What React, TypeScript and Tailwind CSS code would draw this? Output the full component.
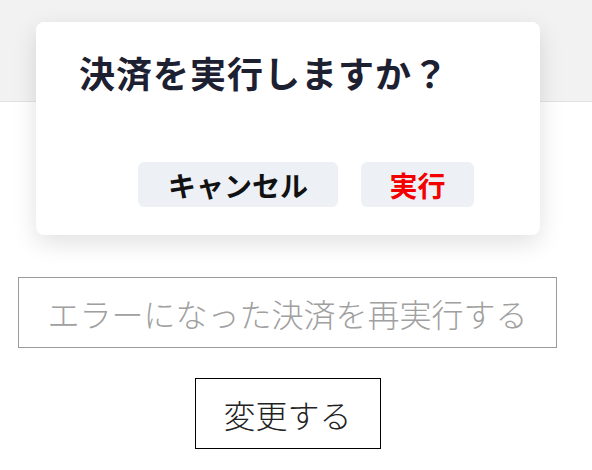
import React from "react";

export default function App() {
  const jp = { fontFamily: '"Noto Sans CJK JP", "Noto Sans", sans-serif' };
  return (
    <div className="relative w-[592px] h-[470px] bg-white overflow-hidden" style={jp}>
      <div className="h-[102px] bg-[#f2f2f2] border-b border-[#e2e2e2]" />
      <div className="ml-[18px] w-[539px] pt-[175px] flex flex-col items-center">
        <input
          readOnly
          placeholder="エラーになった決済を再実行する"
          className="w-full h-[71px] border border-[#9a9a9a] bg-white text-center text-[32px] leading-none font-light text-[#333] placeholder:text-[#a0a0a0] outline-none"
          style={jp}
        />
        <button
          className="mt-[30px] w-[186px] h-[71px] border border-black bg-white text-[32px] leading-none font-light text-[#222] flex items-center justify-center"
          style={jp}
        >
          変更する
        </button>
      </div>

      <div className="absolute left-[36px] top-[22px] w-[504px] h-[213px] bg-white rounded-[8px] shadow-[0_8px_24px_rgba(0,0,0,0.12)] pt-[23px] pl-[43px] pr-[66px]">
        <div className="text-[36px] leading-[54px] font-bold tracking-[1px] text-[#1d2030]">決済を実行しますか？</div>
        <div className="mt-[63px] flex justify-end gap-[23px]">
          <button className="w-[200px] h-[45px] rounded-[6px] bg-[#edf1f6] text-[28px] leading-none font-bold text-[#111] flex items-center justify-center" style={jp}>
            キャンセル
          </button>
          <button className="w-[113px] h-[45px] rounded-[6px] bg-[#edf1f6] text-[28px] leading-none font-bold text-[#f40000] flex items-center justify-center" style={jp}>
            実行
          </button>
        </div>
      </div>
    </div>
  );
}
